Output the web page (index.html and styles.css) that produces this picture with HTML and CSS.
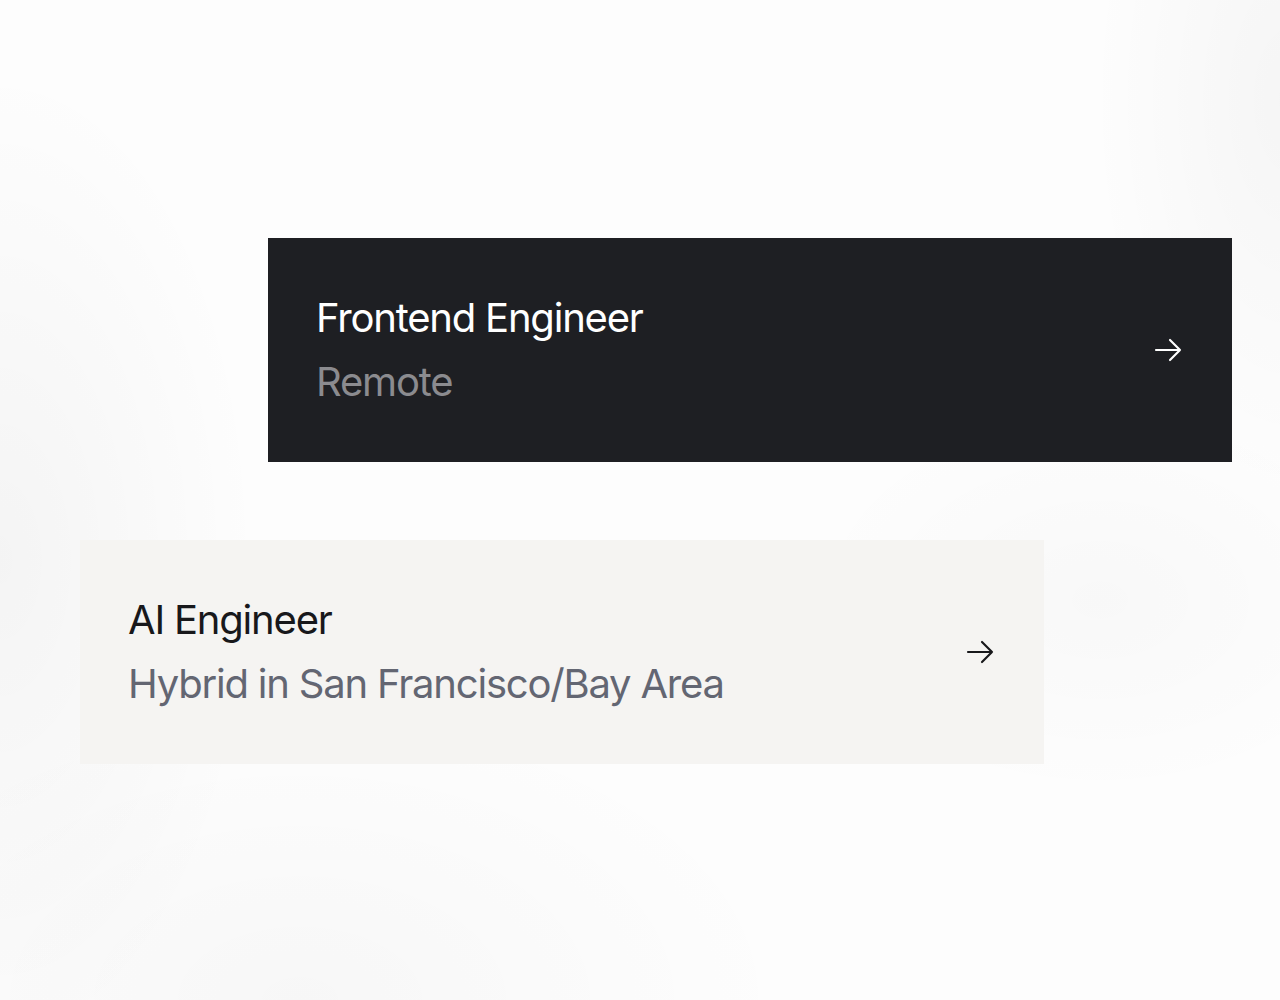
FILE: index.html
```html
<!DOCTYPE html>
<html lang="en">
<head>
<meta charset="utf-8">
<title>Jobs</title>
<link rel="stylesheet" href="styles.css">
</head>
<body>
<main class="page">
  <a class="job job-dark" href="#">
    <div class="job-text">
      <div class="job-title">Frontend Engineer</div>
      <div class="job-loc">Remote</div>
    </div>
    <svg class="arrow" viewBox="0 0 24 24" fill="none" stroke="currentColor" stroke-width="1.6" stroke-linecap="round" stroke-linejoin="round"><path d="M13.5 4.5 21 12m0 0-7.5 7.5M21 12H3"/></svg>
  </a>
  <a class="job job-light" href="#">
    <div class="job-text">
      <div class="job-title">AI Engineer</div>
      <div class="job-loc">Hybrid in San Francisco/Bay Area</div>
    </div>
    <svg class="arrow" viewBox="0 0 24 24" fill="none" stroke="currentColor" stroke-width="1.6" stroke-linecap="round" stroke-linejoin="round"><path d="M13.5 4.5 21 12m0 0-7.5 7.5M21 12H3"/></svg>
  </a>
</main>
</body>
</html>
```

FILE: styles.css
```css
html, body {
  margin: 0;
  padding: 0;
}
body {
  width: 1280px;
  height: 1000px;
  overflow: hidden;
  font-family: Inter, "Noto Sans", sans-serif;
  background-color: #fdfdfd;
  background-image:
    radial-gradient(ellipse 260px 500px at 0px 560px, rgba(0,0,0,0.035), rgba(0,0,0,0) 100%),
    radial-gradient(ellipse 200px 400px at 1290px 100px, rgba(0,0,0,0.03), rgba(0,0,0,0) 100%),
    radial-gradient(ellipse 500px 300px at 300px 1000px, rgba(0,0,0,0.025), rgba(0,0,0,0) 100%),
    radial-gradient(ellipse 300px 200px at 1100px 600px, rgba(0,0,0,0.02), rgba(0,0,0,0) 100%);
}
.page {
  box-sizing: border-box;
  padding: 238px 48px 0 80px;
  display: flex;
  flex-direction: column;
  gap: 78px;
}
.job {
  box-sizing: border-box;
  width: 964px;
  height: 224px;
  padding: 48px;
  display: flex;
  align-items: center;
  justify-content: space-between;
  text-decoration: none;
}
.job-dark {
  align-self: flex-end;
  background: #1e1f23;
  color: #ffffff;
}
.job-light {
  align-self: flex-start;
  background: #f5f4f2;
  color: #18181b;
}
.job-title,
.job-loc {
  font-size: 40px;
  line-height: 64px;
  font-weight: 400;
  letter-spacing: -1.2px;
}
.job-dark .job-loc {
  color: #8b8b8f;
}
.job-light .job-loc {
  color: #636672;
}
.arrow {
  width: 32px;
  height: 32px;
  flex: none;
}
```
